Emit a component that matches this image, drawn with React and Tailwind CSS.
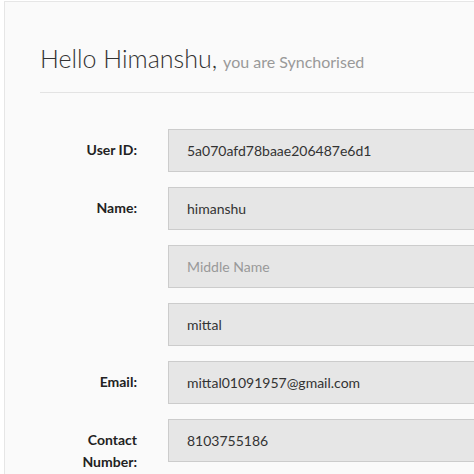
import React from "react";

const rows = [
  { label: "User ID:", value: "5a070afd78baae206487e6d1" },
  { label: "Name:", value: "himanshu" },
  { label: "", value: "", placeholder: "Middle Name" },
  { label: "", value: "mittal" },
  { label: "Email:", value: "mittal01091957@gmail.com" },
  { label: "Contact Number:", value: "8103755186" },
];

export default function App() {
  return (
    <div
      className="w-[474px] h-[474px] overflow-hidden bg-white pl-[4px] pt-[1px]"
      style={{ fontFamily: "Lato, 'Open Sans', sans-serif" }}
    >
      <div className="w-[620px] h-[600px] border-l border-t border-[#e6e6e6] bg-[#fafafa] pl-[35px] pt-[38px]">
        <h1 className="flex items-baseline text-[25px] font-light leading-[36px] text-[#333]">
          <span>Hello Himanshu,</span>
          <span className="ml-[6px] text-[16px] font-normal text-[#999]">you are Synchorised</span>
        </h1>
        <div className="mt-[12px] h-px bg-[#e3e3e3]" />
        <div className="mt-[36px] flex flex-col gap-[15px]">
          {rows.map((r, i) => (
            <div key={i} className="flex items-start">
              <div className="w-[97px] shrink-0 pl-[30px] pt-[10px] text-right text-[14px] font-bold leading-[22px] text-[#222]">
                {r.label}
              </div>
              <input
                readOnly
                value={r.value}
                placeholder={r.placeholder}
                className="ml-[31px] h-[43px] w-[420px] border border-[#cccccc] bg-[#e6e6e6] px-[18px] text-[14px] text-[#333] placeholder:text-[#999] outline-none"
                style={{ fontFamily: "Lato, 'Open Sans', sans-serif" }}
              />
            </div>
          ))}
        </div>
      </div>
    </div>
  );
}
